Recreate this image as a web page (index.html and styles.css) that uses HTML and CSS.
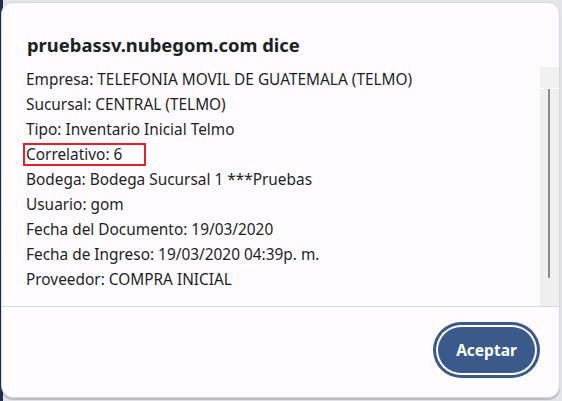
FILE: index.html
```html
<!DOCTYPE html>
<html lang="es">
<head>
<meta charset="utf-8">
<title>pruebassv.nubegom.com dice</title>
<link rel="stylesheet" href="styles.css">
</head>
<body>
<div class="dialog">
  <div class="header">
    <h1 class="title">pruebassv.nubegom.com dice</h1>
  </div>
  <div class="content">
    <div class="message">
      <div class="line">Empresa: TELEFONIA MOVIL DE GUATEMALA (TELMO)</div>
      <div class="line">Sucursal: CENTRAL (TELMO)</div>
      <div class="line">Tipo: Inventario Inicial Telmo</div>
      <div class="line"><span class="highlight">Correlativo: 6</span></div>
      <div class="line">Bodega: Bodega Sucursal 1 ***Pruebas</div>
      <div class="line">Usuario: gom</div>
      <div class="line">Fecha del Documento: 19/03/2020</div>
      <div class="line">Fecha de Ingreso: 19/03/2020 04:39p. m.</div>
      <div class="line">Proveedor: COMPRA INICIAL</div>
    </div>
    <div class="scrollbar">
      <div class="scroll-top"></div>
      <div class="scroll-track"><div class="scroll-thumb"></div></div>
    </div>
  </div>
  <div class="footer">
    <button class="btn">Aceptar</button>
  </div>
</div>
</body>
</html>
```
FILE: styles.css
```css
html, body {
  margin: 0;
  padding: 0;
}
body {
  width: 562px;
  height: 401px;
  overflow: hidden;
  background: linear-gradient(90deg, #1d2f49 0, #1d2f49 3px, #e4e5ea 3px);
  font-family: "Noto Sans", "Open Sans", sans-serif;
  color: #1f1f1f;
}
.dialog {
  margin: 2px 0 0 1px;
  width: 559px;
  height: 396px;
  box-sizing: border-box;
  background: #fdfbfe;
  border: 1px solid #d8d9e0;
  border-radius: 12px;
  box-shadow: 0 2px 1px rgba(0,0,0,0.18);
  display: flex;
  flex-direction: column;
  overflow: hidden;
}
.header {
  height: 64px;
  padding: 0 25px;
  display: flex;
  align-items: flex-start;
}
.title {
  margin: 29px 0 0 0;
  font-size: 18.4px;
  line-height: 26px;
  font-weight: 700;
  color: #202124;
}
.content {
  height: 239px;
  display: flex;
  border-bottom: 1px solid #cddbf6;
}
.message {
  flex: 1;
  padding: 0 24px;
}
.line {
  height: 25px;
  line-height: 25px;
  font-size: 15.4px;
  white-space: nowrap;
}
.highlight {
  display: inline-block;
  line-height: 19px;
  margin-left: -3px;
  padding: 0 22px 0 1px;
  border: 2px solid #e3202b;
}
.scrollbar {
  width: 19px;
  display: flex;
  flex-direction: column;
  background: #efefef;
}
.scroll-top {
  height: 21px;
  border-bottom: 1px solid #fdfdfd;
  background: #f0f0f0;
}
.scroll-track {
  flex: 1;
  position: relative;
}
.scroll-thumb {
  position: absolute;
  left: 8px;
  top: 0;
  width: 2px;
  height: 189px;
  background: #8c8c8c;
}
.footer {
  flex: 1;
  display: flex;
  justify-content: flex-end;
  align-items: flex-start;
  padding: 20px 24px 0 0;
}
.btn {
  width: 97px;
  height: 46px;
  border: none;
  border-radius: 23px;
  background: #3b5a8c;
  color: #ffffff;
  font-family: "Noto Sans", "Open Sans", sans-serif;
  font-size: 15.5px;
  font-weight: 700;
  box-shadow: 0 0 0 2px #ffffff, 0 0 0 5px #3b5a8c;
  cursor: pointer;
}
```
